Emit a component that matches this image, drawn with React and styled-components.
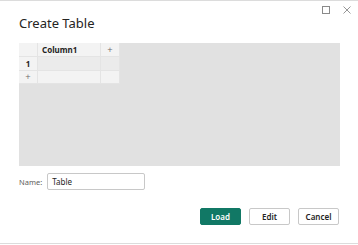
import React from "react";
import styled, { createGlobalStyle } from "styled-components";

const Global = createGlobalStyle`
  body {
    margin: 0;
    background: #fff;
    font-family: "Noto Sans", "Open Sans", sans-serif;
  }
`;

const Dialog = styled.div`
  width: 358px;
  height: 244px;
  box-sizing: border-box;
  border-top: 1px solid #dcdcdc;
  border-bottom: 1px solid #dcdcdc;
  display: flex;
  flex-direction: column;
`;

const Header = styled.div`
  display: flex;
  justify-content: space-between;
  align-items: flex-start;
  padding: 5px 7px 0 19px;
`;

const Title = styled.h1`
  margin: 7px 0 0;
  font-size: 13px;
  line-height: 20px;
  font-weight: 400;
  color: #252423;
`;

const Controls = styled.div`
  display: flex;
  gap: 13px;
  align-items: center;
`;

const Canvas = styled.div`
  margin: 10px 18px 0 19px;
  height: 123px;
  background: #e1e1e1;
`;

const Grid = styled.div`
  display: grid;
  grid-template-columns: 19px 63px 19px;
  grid-template-rows: 14px 14px 13px;
  width: 101px;
  background: #e6e6e6;
`;

const Cell = styled.div`
  box-sizing: border-box;
  border-right: 1px solid #e4e4e4;
  border-bottom: 1px solid #e4e4e4;
  background: ${(p) => (p.$active ? "#ebebeb" : "#f3f3f3")};
  font-size: 8px;
  font-weight: 700;
  color: #252423;
  display: flex;
  align-items: center;
  justify-content: ${(p) => (p.$center ? "center" : "flex-start")};
  padding-left: ${(p) => (p.$center ? "0" : "4px")};
`;

const Plus = styled.span`
  font-family: "DejaVu Sans", sans-serif;
  font-size: 7px;
  font-weight: 400;
  color: #6a6a6a;
`;

const NameRow = styled.div`
  display: flex;
  align-items: center;
  gap: 5px;
  margin: 7px 0 0 19px;
`;

const Label = styled.label`
  font-size: 7.5px;
  color: #605e5c;
`;

const Input = styled.div`
  box-sizing: border-box;
  width: 98px;
  height: 17px;
  border: 1px solid #c8c8c8;
  border-radius: 2px;
  font-size: 8px;
  color: #252423;
  display: flex;
  align-items: center;
  padding-left: 4px;
`;

const Footer = styled.div`
  display: flex;
  justify-content: flex-end;
  gap: 8px;
  margin: 18px 19px 0 0;
`;

const Button = styled.button`
  box-sizing: border-box;
  width: 41px;
  height: 17px;
  padding: 0;
  border-radius: 2px;
  font-family: inherit;
  font-size: 8px;
  font-weight: 600;
  border: 1px solid ${(p) => (p.$primary ? "#117865" : "#c8c8c8")};
  background: ${(p) => (p.$primary ? "#117865" : "#fff")};
  color: ${(p) => (p.$primary ? "#fff" : "#252423")};
`;

export default function App() {
  return (
    <>
      <Global />
      <Dialog>
        <Header>
          <Title>Create Table</Title>
          <Controls>
            <svg width="8" height="8" viewBox="0 0 8 8">
              <rect x="0.5" y="0.5" width="7" height="7" fill="none" stroke="#8a8a8a" strokeWidth="1" />
            </svg>
            <svg width="8" height="8" viewBox="0 0 8 8">
              <path d="M0.5 0.5 L7.5 7.5 M7.5 0.5 L0.5 7.5" stroke="#8a8a8a" strokeWidth="0.9" />
            </svg>
          </Controls>
        </Header>
        <Canvas>
          <Grid>
            <Cell />
            <Cell>Column1</Cell>
            <Cell $center>
              <Plus>+</Plus>
            </Cell>
            <Cell $center>1</Cell>
            <Cell $active />
            <Cell $active />
            <Cell $center>
              <Plus>+</Plus>
            </Cell>
            <Cell />
            <Cell />
          </Grid>
        </Canvas>
        <NameRow>
          <Label>Name:</Label>
          <Input>Table</Input>
        </NameRow>
        <Footer>
          <Button $primary>Load</Button>
          <Button>Edit</Button>
          <Button>Cancel</Button>
        </Footer>
      </Dialog>
    </>
  );
}
